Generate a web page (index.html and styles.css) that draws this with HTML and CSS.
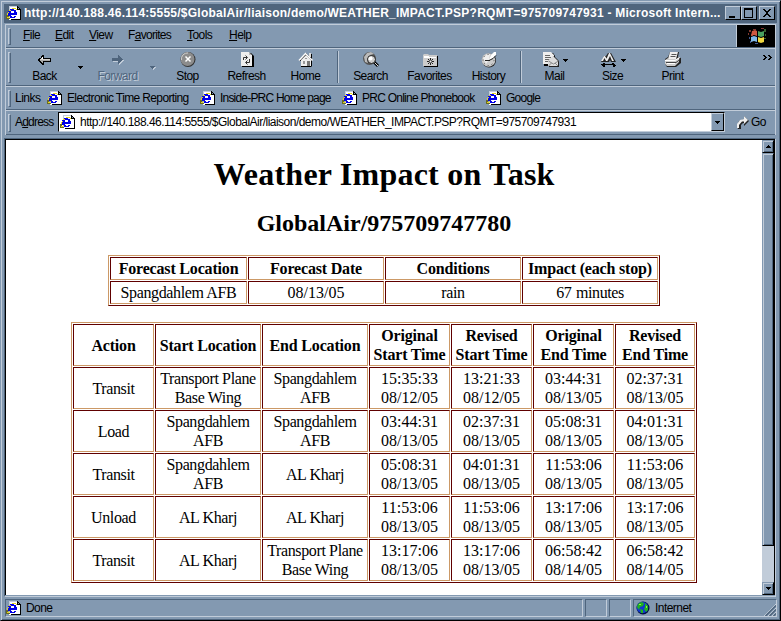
FILE: index.html
```html
<!DOCTYPE html>
<html lang="en">
<head>
<meta charset="utf-8">
<title>Weather Impact on Task</title>
<link rel="stylesheet" href="styles.css">
</head>
<body>
<svg class="defs" width="0" height="0">
  <symbol id="ie" viewBox="0 0 15 15">
    <path fill="#fff" d="M3 0h8l3 3v11H3z"/>
    <path fill="#c1ccd9" d="M3 0h8v1H4v12H3z"/>
    <path fill="#000" d="M11 0h1v1h1v1h1v1h1v11H5v-1h9V4h-3z"/>
    <path fill="#8399b1" d="M12 2h1v1h-1z"/>
    <path fill="#0000e8" fill-rule="evenodd" d="M4 3h4v1h2v2h1v3H5v1h1v1h2v-1h2v1H9v1H4v-1H3v-1H2V5h1V4h1zM5 5v2h3V5z"/>
    <path fill="#e8d820" d="M6 2h4v1H6zM3 4h2v1H3zM2 6h1v1H2zM1 7h1v2H1zM10 3h1v1h-1zM1 11h2v1H1zM3 10h1v1H3z"/>
    <path fill="#6b6b20" d="M0 9h1v4H0zM1 12h3v1H1zM1 9h1v2H1z"/>
  </symbol>
</svg>
<div class="window">
  <header class="title">
    <svg class="ie" width="15" height="15"><use href="#ie"/></svg>
    <span class="title-text">http://140.188.46.114:5555/$GlobalAir/liaison/demo/WEATHER_IMPACT.PSP?RQMT=975709747931 - Microsoft Intern...</span>
    <div class="controls">
      <span class="ctl"><svg width="12" height="11"><path d="M2 8h6v2H2z"/></svg></span>
      <span class="ctl"><svg width="12" height="11"><path fill-rule="evenodd" d="M1 0h9v10H1zM2 2v7h7V2z"/></svg></span>
      <span class="ctl last"><svg width="12" height="11"><path d="M2 1h2v1h1v1h2V2h1V1h2v1H9v1H8v1H7v2h1v1h1v1h1v1H8V8H7V7H5v1H4v1H2V8h1V7h1V6h1V4H4V3H3V2H2z"/></svg></span>
    </div>
  </header>

  <div class="bands">
    <nav class="band menu">
      <i class="grip"></i>
      <span class="m1"><u>F</u>ile</span><span class="m2"><u>E</u>dit</span><span class="m3"><u>V</u>iew</span><span class="m4">F<u>a</u>vorites</span><span class="m5"><u>T</u>ools</span><span class="m6"><u>H</u>elp</span>
      <div class="brand">
        <svg width="38" height="23" viewBox="0 0 38 23">
          <path fill="#803830" d="M12 5h2v2h-2zM14 9h2v2h-2zM11 8h1v2h-1zM24 3h3v1h-3zM16 4h3v1h-3z"/>
          <path fill="#d05840" d="M15 6l3-1 2 1v5l-3-1-3 1z"/>
          <path fill="#48a060" d="M21 6l3 1 3-1v5l-3 1-3-1z"/>
          <path fill="#80b8e8" d="M14 12l3-1 3 1v5l-3-1-3 1z"/>
          <path fill="#f0d840" d="M21 12l3 1 3-1v5l-3 1-3-1z"/>
          <path fill="#386030" d="M27 4h2v3h-2zM28 9h1v2h-1zM27 13h2v1h-2z"/>
          <path fill="#405890" d="M12 12h1v2h-1zM13 16h1v2h-1zM18 18h3v1h-3z"/>
        </svg>
      </div>
    </nav>

    <div class="band tools">
      <i class="grip"></i>
      <div class="btn"><svg width="18" height="18"><path fill="#000" d="M3 7h2V5h1V4h2v3h7v4H8v3H6v-1H5v-1H4v-1H3v-1H2V8h1z"/><path fill="#d6d3ce" d="M4 8h1V7h1V6h1v2h7v1H4z"/><path fill="#fff" d="M6 6h1v2H6z"/><path fill="#aaa" d="M4 9h10v1H7v2H6v-1H5v-1H4z"/></svg><span>Back</span></div>
      <svg class="drop" width="5" height="3"><path d="M0 0h5v1H4v1H3v1H2V2H1V1H0z"/></svg>
      <div class="btn off"><svg width="18" height="18"><path fill="#c1ccd9" d="M4 8h6V5h1v1h1v1h1v1h1v1h1v1h-1v1h-1v1h-1v1h-1v1h-1v-3H4z"/><path fill="#4f657d" d="M3 7h6V4h1v1h1v1h1v1h1v1h1v1h-1v1h-1v1h-1v1h-1v1H9v-3H3z"/></svg><span>Forward</span></div>
      <svg class="drop off" width="6" height="4"><path fill="#c1ccd9" d="M1 1h5v1H5v1H4v1H3V3H2V2H1z"/><path fill="#4f657d" d="M0 0h5v1H4v1H3v1H2V2H1V1H0z"/></svg>
      <div class="btn"><svg width="18" height="18"><circle cx="9" cy="8.500" r="7.500" fill="#333"/><circle cx="8.500" cy="8" r="7" fill="#8c8c8c"/><path fill="none" stroke="#ccc" d="M2.500 9A6 6 0 0 1 9 2"/><path stroke="#fff" stroke-width="1.500" d="M6.500 5.500l5 5m0-5l-5 5"/></svg><span>Stop</span></div>
      <div class="btn"><svg width="18" height="18"><path fill="#000" d="M4 2h9l3 3v11H4z"/><path fill="#eee" d="M3 1h8v3h3v11H3z"/><path fill="#bbb" d="M11 1l3 3h-3z"/><path fill="none" stroke="#333" d="M5.500 9V6.500H9M7.500 4.500l2 2-2 2M11.500 8v3.500H8M9.500 9.500l-2 2 2 2"/></svg><span>Refresh</span></div>
      <div class="btn"><svg width="18" height="18"><path fill="#000" d="M13 3h2v12l-1 1H4v-6L2 10l7-8 3 3z"/><path fill="#eee" d="M4 9l5-5 5 5v6H4z"/><path fill="none" stroke="#fff" stroke-width="1.500" d="M2 9.500L8.500 2.500l7 7"/><path fill="#ddd" d="M12 2h2v4h-2z"/><path fill="#777" d="M10 10h3v5h-3z"/><path fill="#999" d="M6 10h2v3H6zM8 7h2v1H8z"/></svg><span>Home</span></div>
      <i class="sep"></i>
      <div class="btn"><svg width="18" height="18"><circle cx="7.500" cy="7.500" r="6.500" fill="#555"/><path fill="#bbb" d="M2 6l3-4 4-1 3 2-4 1-3 4 1 4-3-1z"/><path stroke="#000" stroke-width="3" d="M12 11l4 4"/><path stroke="#ddd" d="M12 11l4 4"/><circle cx="9.500" cy="8.500" r="4" fill="#ccc" stroke="#222"/><circle cx="8.500" cy="7.500" r="2" fill="#fff"/></svg><span>Search</span></div>
      <div class="btn"><svg width="18" height="18"><path fill="#000" d="M3 5h14v11H3z"/><path fill="#ccc" d="M2 4l1-1h4l1 1h8v11H2z"/><path fill="#fff" d="M3 5h5v1h7v1H3z"/><path stroke="#222" d="M9.500 7v7M6 10.500h7M7 8l5 5m0-5l-5 5"/><path fill="#eee" d="M8.500 9.500h2v2h-2z"/></svg><span>Favorites</span></div>
      <div class="btn"><svg width="18" height="18"><circle cx="9" cy="9.500" r="7" fill="#222"/><circle cx="8.500" cy="9" r="6.800" fill="#ccc"/><path fill="#eee" d="M3 7l4-4 3 0-1 6-3 4z"/><path fill="none" stroke="#444" stroke-dasharray="1 3" d="M8.500 3.500a5.500 5.500 0 1 0 5.500 5.500"/><path fill="#fff" d="M9 9l2-5 3-3h2v3l-3 3z"/><path fill="none" stroke="#222" d="M9 9.500l4-2 3-3M5 9.500h5"/></svg><span>History</span></div>
      <i class="sep"></i>
      <div class="btn mail"><svg width="26" height="18"><path fill="#000" d="M2 2h9l2 3v10H2z"/><path fill="#eee" d="M1 1h8l3 3v9H1z"/><path fill="none" stroke="#666" d="M3 4.500h5M3 6.500h6M3 8.500h5M3 10.500h3"/><path fill="#222" d="M7 10l5-5 5 5v6H7z"/><path fill="#ddd" d="M6 9.500L11 5l5 5v5H6z"/><path fill="none" stroke="#888" d="M6.500 10l5 3 5-3M6.500 15l3-3m6.500 3l-3-3"/><path d="M21 8h5v1h-1v1h-1v1h-1v-1h-1V9h-1z"/></svg><span>Mail</span></div>
      <div class="btn size"><svg width="26" height="18"><path fill="#222" d="M1 11l3-6h2l2-3h3l5 9h-5l-1-2-1 2z"/><path fill="#eee" d="M1 10l3-5h1l3 5H6L4.500 7 3 10zM6 9l3-7h1l4 8h-2l-2-5-2 4z"/><path d="M2 13h1v-1h2v1h7v-1h2v1h1v1h1v1h-1v1h-2v-2H5v2H3v-1H2v-1H1v-1zM21 8h5v1h-1v1h-1v1h-1v-1h-1V9h-1z"/></svg><span>Size</span></div>
      <div class="btn print"><svg width="18" height="18"><path fill="#222" d="M6 1h9l-1 5 3 1v5l-5 4H3l-2-3V8l3-2z"/><path fill="#eee" d="M6 1h8l-2 7H4z"/><path fill="none" stroke="#555" d="M7.500 3.500h5M6.500 5.500h5"/><path fill="#ccc" d="M1 9l3-2v1h8l3-2v5l-4 4H3l-2-2z"/><path fill="none" stroke="#fff" d="M1 9.500h10l5-3M3 12.500h8"/><path stroke="#444" fill="none" d="M2 11.500h10l4-3"/></svg><span>Print</span></div>
      <svg class="chevron" width="9" height="5"><path d="M0 0h2v1h1v1h1v1H3v1H2v1H0V4h1V3h1V2H1V1H0zM5 0h2v1h1v1h1v1H8v1H7v1H5V4h1V3h1V2H6V1H5z"/></svg>
    </div>

    <div class="band links">
      <i class="grip"></i>
      <span class="links-label">Links</span>
      <a class="l1"><svg class="ie" width="15" height="15"><use href="#ie"/></svg>Electronic Time Reporting</a>
      <a class="l2"><svg class="ie" width="15" height="15"><use href="#ie"/></svg>Inside-PRC Home page</a>
      <a class="l3"><svg class="ie" width="15" height="15"><use href="#ie"/></svg>PRC Online Phonebook</a>
      <a class="l4"><svg class="ie" width="15" height="15"><use href="#ie"/></svg>Google</a>
    </div>

    <div class="band address">
      <i class="grip"></i>
      <span class="address-label">A<u>d</u>dress</span>
      <div class="combo">
        <svg class="ie" width="15" height="15"><use href="#ie"/></svg>
        <span class="url">http://140.188.46.114:5555/$GlobalAir/liaison/demo/WEATHER_IMPACT.PSP?RQMT=975709747931</span>
        <span class="combo-btn"><svg width="5" height="3"><path d="M0 0h5v1H4v1H3v1H2V2H1V1H0z"/></svg></span>
      </div>
      <svg class="go-icon" width="14" height="15"><path fill="#222" d="M8 1l5 5-5 5V8H7L5 10v4H2L1 11l2-5 5-2z"/><path fill="#eee" d="M8 1l4 4-4 4V6.500H6L3 10v3H1v-4l3-4 4-1z"/></svg>
      <span class="go">Go</span>
    </div>
  </div>

  <div class="client">
    <main class="page">
      <h1>Weather Impact on Task</h1>
      <h2>GlobalAir/975709747780</h2>
      <table class="forecast">
        <colgroup><col class="w137"><col class="w136"><col class="w136"><col class="w136"></colgroup>
        <tr><th>Forecast Location</th><th>Forecast Date</th><th>Conditions</th><th>Impact (each stop)</th></tr>
        <tr><td class="name">Spangdahlem AFB</td><td>08/13/05</td><td class="name">rain</td><td class="mins">67 minutes</td></tr>
      </table>
      <table class="schedule">
        <colgroup><col class="w81"><col class="w106"><col class="w106"><col class="w81"><col class="w81"><col class="w81"><col class="w80"></colgroup>
        <tr><th>Action</th><th>Start Location</th><th>End Location</th><th>Original<br>Start Time</th><th>Revised<br>Start Time</th><th>Original<br>End Time</th><th>Revised<br>End Time</th></tr>
        <tr><td>Transit</td><td>Transport Plane<br>Base Wing</td><td>Spangdahlem<br>AFB</td><td>15:35:33<br>08/12/05</td><td>13:21:33<br>08/12/05</td><td>03:44:31<br>08/13/05</td><td>02:37:31<br>08/13/05</td></tr>
        <tr><td>Load</td><td>Spangdahlem<br>AFB</td><td>Spangdahlem<br>AFB</td><td>03:44:31<br>08/13/05</td><td>02:37:31<br>08/13/05</td><td>05:08:31<br>08/13/05</td><td>04:01:31<br>08/13/05</td></tr>
        <tr><td>Transit</td><td>Spangdahlem<br>AFB</td><td>AL Kharj</td><td>05:08:31<br>08/13/05</td><td>04:01:31<br>08/13/05</td><td>11:53:06<br>08/13/05</td><td>11:53:06<br>08/13/05</td></tr>
        <tr><td>Unload</td><td>AL Kharj</td><td>AL Kharj</td><td>11:53:06<br>08/13/05</td><td>11:53:06<br>08/13/05</td><td>13:17:06<br>08/13/05</td><td>13:17:06<br>08/13/05</td></tr>
        <tr><td>Transit</td><td>AL Kharj</td><td>Transport Plane<br>Base Wing</td><td>13:17:06<br>08/13/05</td><td>13:17:06<br>08/13/05</td><td>06:58:42<br>08/14/05</td><td>06:58:42<br>08/14/05</td></tr>
      </table>
    </main>
    <div class="scroll">
      <span class="sbtn"><svg width="5" height="3"><path d="M2 0h1v1h1v1h1v1H0V2h1V1h1z"/></svg></span>
      <span class="thumb"></span>
      <span class="track"></span>
      <span class="sbtn"><svg width="5" height="3"><path d="M0 0h5v1H4v1H3v1H2V2H1V1H0z"/></svg></span>
    </div>
  </div>

  <footer class="status">
    <div class="pane main"><svg class="ie" width="15" height="15"><use href="#ie"/></svg><span>Done</span></div>
    <div class="pane small"></div>
    <div class="pane small"></div>
    <div class="pane zone">
      <svg width="14" height="14"><circle cx="7" cy="7" r="6.500" fill="#001040"/><circle cx="6.500" cy="6.500" r="5.800" fill="#1038d0"/><path fill="#20b020" d="M2 3l3-2 3 1-1 3-3 1-1 3-2-3zM9 2l3 3v4l-2 2-2-3 1-2zM4 8l3 1v3l-2 0z"/><path fill="#90f040" d="M3 3h2v1H3zM10 5h1v2h-1z"/></svg>
      <span>Internet</span>
      <svg class="resize" width="12" height="12"><path stroke="#c1ccd9" d="M0 12L12 0M4 12l8-8M8 12l4-4"/><path stroke="#4f657d" stroke-width="1.500" d="M1.500 12L12 1.500M5.500 12L12 5.500M9.500 12L12 9.500"/></svg>
    </div>
  </footer>
</div>
</body>
</html>
```
FILE: styles.css
```css
* { box-sizing: border-box; }
body { margin: 0; overflow: hidden; }
svg { display: block; flex: none; }
.defs { position: absolute; }

.window {
  width: 781px;
  height: 621px;
  padding: 2px 2px 1px 2px;
  background: #8399b1;
  border: 1px solid;
  border-color: #8399b1 #000 #000 #8399b1;
  box-shadow: inset 1px 1px #c1ccd9, inset -1px -1px #4f657d;
  display: flex;
  flex-direction: column;
  font: 12px/14px "Liberation Sans", Arial, sans-serif;
  letter-spacing: -0.55px;
  color: #000;
}
span, a { white-space: nowrap; }
u { text-underline-offset: 1px; text-decoration-thickness: 1px; text-decoration-skip-ink: none; }

/* Title bar */
.title {
  margin: 1px 1px 0 1px;
  height: 19px;
  padding-bottom: 2px;
  background: #4f657d;
  display: flex;
  align-items: center;
  color: #fff;
  font-weight: bold;
}
.title .ie { margin: 1px 0 0 2px; }
.title-text { margin-left: 3px; width: 699px; overflow: hidden; letter-spacing: 0.25px; }
.controls { display: flex; margin: 1px 0 0 auto; padding-right: 2px; }
.ctl {
  width: 16px;
  height: 14px;
  padding: 1px;
  background: #8399b1;
  border: 1px solid;
  border-color: #c1ccd9 #000 #000 #c1ccd9;
}
.ctl.last { margin-left: 2px; }

/* Tool bands */
.bands {
  margin: 1px 2px 0 2px;
  height: 111px;
  border-left: 1px solid #c1ccd9;
  border-right: 1px solid #c1ccd9;
}
.band {
  display: flex;
  align-items: center;
  border-top: 1px solid #c1ccd9;
  border-bottom: 1px solid #4f657d;
  padding-left: 2px;
}
.grip {
  width: 3px;
  align-self: stretch;
  margin: 3px 0 2px;
  border: 1px solid;
  border-color: #c1ccd9 #4f657d #4f657d #c1ccd9;
}
.menu { height: 24px; }
.menu span { padding-bottom: 2px; }
.menu .m1 { margin-left: 12px; width: 32px; }
.menu .m2 { width: 34px; }
.menu .m3 { width: 39px; }
.menu .m4 { width: 59px; letter-spacing: -0.7px; }
.menu .m5 { width: 42px; }
.brand { margin-left: auto; width: 39px; height: 22px; background: #000; border-left: 1px solid #c1ccd9; }

.tools { height: 38px; }
.btn {
  width: 59px;
  height: 36px;
  padding-top: 2px;
  display: flex;
  flex-direction: column;
  align-items: center;
}
.grip + .btn { margin-left: 4px; }
.btn.off span { color: #4f657d; text-shadow: 1px 1px #c1ccd9; }
.drop { margin: 0 5px 0 4px; }
.drop.off { margin: 1px 2px 0 3px; }
.sep {
  width: 2px;
  height: 32px;
  margin: 0 2px 0 2px;
  border-left: 1px solid #4f657d;
  border-right: 1px solid #c1ccd9;
}
.mail { margin-left: 1px; }
.size { margin-left: -1px; }
.print { margin-left: 1px; }
.chevron { margin: 0 3px 20px auto; }

.links { height: 24px; letter-spacing: -0.75px; }
.links a { display: flex; align-items: center; gap: 5px; }
.links-label { margin-left: 4px; width: 32px; letter-spacing: -0.5px; }
.l1 { width: 153px; letter-spacing: -0.63px; }
.l2 { width: 142px; letter-spacing: -0.8px; }
.l3 { width: 144px; }

.address { height: 25px; }
.address-label { margin: 0 0 1px 4px; width: 43px; letter-spacing: -0.8px; }
.combo {
  width: 667px;
  height: 20px;
  margin-bottom: 1px;
  background: #fff;
  border: 1px solid;
  border-color: #000 #c1ccd9 #c1ccd9 #000;
  display: flex;
  align-items: center;
  padding-left: 1px;
}
.url { margin-left: 5px; letter-spacing: -0.52px; }
.combo-btn {
  margin-left: auto;
  width: 13px;
  height: 18px;
  background: #8399b1;
  border: 1px solid;
  border-color: #c1ccd9 #000 #000 #c1ccd9;
  display: grid;
  place-items: center;
}
.go-icon { margin-left: 11px; }
.go { margin: 0 0 1px 1px; }

/* Document area */
.client {
  margin: 3px 2px 0 1px;
  height: 459px;
  flex: none;
  display: flex;
  padding-bottom: 1px;
  border: 1px solid;
  border-color: #4f657d #c1ccd9 #c1ccd9 #4f657d;
}
.page {
  width: 757px;
  background: #fff;
  border-top: 1px solid #000;
  border-left: 1px solid #000;
  font: 16px/19px "Liberation Serif", "Times New Roman", serif;
  letter-spacing: 0;
  text-align: center;
}
h1 { margin: 16px 0 0; font-size: 32px; line-height: 36px; letter-spacing: 0.22px; }
h2 { margin: 17px 0 0; font-size: 24px; line-height: 28px; }
table {
  table-layout: fixed;
  border-collapse: separate;
  border-spacing: 1px;
  border: 1px solid;
  border-color: #cc9966 #600000 #600000 #cc9966;
}
th, td {
  padding: 1px 0;
  white-space: nowrap;
  border: 1px solid;
  border-color: #600000 #cc9966 #cc9966 #600000;
}
th { letter-spacing: -0.18px; }
.name, .schedule td:nth-child(-n+3) { letter-spacing: -0.37px; }
.mins { letter-spacing: -0.4px; word-spacing: 1px; }
.forecast { width: 552px; margin: 18px 0 0 102px; }
.schedule { width: 626px; margin: 16px 0 0 65px; }
.w137 { width: 137px; }
.w136 { width: 136px; }
.w106 { width: 106px; }
.w81 { width: 81px; }
.w80 { width: 80px; }

.scroll {
  width: 13px;
  flex: none;
  display: flex;
  flex-direction: column;
  background: #c1ccd9;
  border-top: 1px solid #000;
  border-right: 1px solid #000;
}
.sbtn, .thumb {
  background: #8399b1;
  border: 1px solid;
  border-color: #8399b1 #000 #000 #8399b1;
  box-shadow: inset 1px 1px #c1ccd9, inset -1px -1px #4f657d;
}
.sbtn { height: 13px; display: grid; place-items: center; }
.thumb { height: 393px; }
.track { flex: 1; }

/* Status bar */
.status { margin: 2px 1px 0 2px; height: 18px; display: flex; gap: 2px; }
.pane {
  border: 1px solid;
  border-color: #4f657d #c1ccd9 #c1ccd9 #4f657d;
  display: flex;
  align-items: center;
}
.pane span { margin-bottom: 1px; }
.main { width: 578px; gap: 5px; }
.small { width: 22px; }
.zone { flex: 1; padding-left: 2px; gap: 5px; }
.resize { margin: 4px 0 0 auto; }
```
